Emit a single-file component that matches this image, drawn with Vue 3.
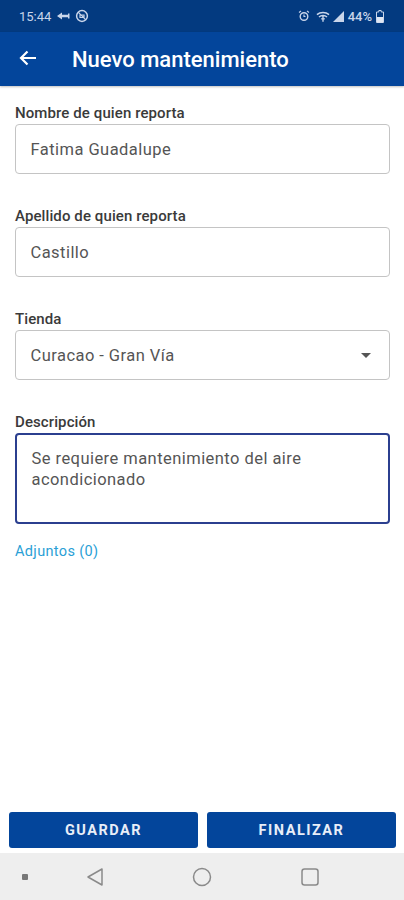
<script setup>
const fields = [
  { label: 'Nombre de quien reporta', value: 'Fatima Guadalupe' },
  { label: 'Apellido de quien reporta', value: 'Castillo' },
]
</script>

<template>
  <div class="screen">
    <div class="status">
      <div class="st-left">
        <span>15:44</span>
        <svg width="14" height="10" viewBox="0 0 14 10"><path d="M1 5l5-3.500v2.300h6V2.500h1.500v5H12V6.200H6v2.300z" fill="#c9d5ea"/></svg>
        <svg width="14" height="14" viewBox="0 0 14 14"><circle cx="7" cy="7" r="5.400" stroke="#c9d5ea" stroke-width="1.500" fill="none"/><path d="M3.200 3.200l7.600 7.600M5 6h4v2.500H5z" stroke="#c9d5ea" stroke-width="1.200" fill="none"/></svg>
      </div>
      <div class="st-right">
        <svg width="12" height="12" viewBox="0 0 12 12"><circle cx="6" cy="6.500" r="3.800" stroke="#c9d5ea" stroke-width="1.400" fill="none"/><path d="M1 2.500l2-1.500M11 2.500L9 1M6 4.500v2h1.500" stroke="#c9d5ea" stroke-width="1.100" fill="none"/></svg>
        <svg class="wifi" width="14" height="13" viewBox="0 0 15 13"><path d="M1 4.500C4.500 1.500 10.500 1.500 14 4.500M3.200 7C5.500 5 9.500 5 11.800 7M7.500 6v6" stroke="#c9d5ea" stroke-width="1.500" fill="none"/><path d="M5.500 9h4" stroke="#c9d5ea" stroke-width="1.300"/></svg>
        <svg class="signal" width="13" height="11" viewBox="0 0 13 11"><path d="M1 11L12 0v11z" fill="#c9d5ea"/></svg>
        <span class="pct">44%</span>
        <svg width="10" height="13" viewBox="0 0 8 13"><path d="M2.800 .5h2.400v1.500H7.500v10.500H.5V2h2.300z" stroke="#c9d5ea" stroke-width="1" fill="none"/><rect x="1" y="7" width="6" height="5.500" fill="#dfe6f3"/></svg>
      </div>
    </div>

    <header class="bar">
      <svg class="back" width="18" height="16" viewBox="0 0 18 16"><path d="M17 8H2M8.500 1.500L2 8l6.500 6.500" stroke="#fff" stroke-width="2.200" fill="none"/></svg>
      <h1>Nuevo mantenimiento</h1>
    </header>

    <main class="form">
      <div v-for="f in fields" :key="f.label" class="field">
        <label>{{ f.label }}</label>
        <div class="box">{{ f.value }}</div>
      </div>
      <div class="field">
        <label>Tienda</label>
        <div class="box select">
          <span>Curacao - Gran Vía</span>
          <i class="caret"></i>
        </div>
      </div>
      <div class="field desc">
        <label>Descripción</label>
        <div class="box area">Se requiere mantenimiento del aire acondicionado</div>
      </div>
      <a class="attach">Adjuntos (0)</a>
    </main>

    <div class="actions">
      <button>GUARDAR</button>
      <button>FINALIZAR</button>
    </div>

    <nav class="nav">
      <span class="dot"></span>
      <svg width="18" height="20" viewBox="0 0 18 20"><path d="M16 2L2 10l14 8z" stroke="#8a8a8a" stroke-width="1.500" fill="none" stroke-linejoin="round"/></svg>
      <svg width="20" height="20" viewBox="0 0 20 20"><circle cx="10" cy="10" r="8.500" stroke="#8a8a8a" stroke-width="1.500" fill="none"/></svg>
      <svg width="20" height="20" viewBox="0 0 20 20"><rect x="2" y="2" width="16" height="16" rx="2.500" stroke="#8a8a8a" stroke-width="1.500" fill="none"/></svg>
    </nav>
  </div>
</template>

<style scoped>
.screen {
  width: 404px;
  height: 900px;
  display: flex;
  flex-direction: column;
  background: #fff;
  font-family: Roboto, "Liberation Sans", sans-serif;
  overflow: hidden;
}
.status {
  height: 32px;
  flex: none;
  background: #033a80;
  color: #c9d5ea;
  display: flex;
  align-items: center;
  justify-content: space-between;
  padding: 0 19px 0 19px;
  font-size: 13px;
}
.st-left, .st-right { display: flex; align-items: center; gap: 2px; }
.st-left { gap: 5px; }
.st-right svg:first-child { margin-right: 4px; }
.pct { font-weight: 500; margin: 0 1px; }
.bar {
  height: 54px;
  flex: none;
  background: #03459b;
  display: flex;
  align-items: center;
  padding: 0 0 0 19px;
  box-shadow: 0 1px 2px rgba(0,0,0,.25);
  position: relative;
}
.bar h1 {
  margin: 0 0 0 35px;
  color: #fff;
  font-size: 22px;
  font-weight: 500;
  letter-spacing: 0;
}
.back { margin-bottom: 3px; }
.form {
  flex: 1;
  padding: 18px 14px 0 15px;
}
.field { margin-bottom: 33px; }
.field label {
  display: block;
  font-size: 15px;
  font-weight: 500;
  line-height: 18px;
  letter-spacing: .1px;
  color: #3a3a3a;
  margin-bottom: 2px;
}
.box {
  box-sizing: border-box;
  height: 50px;
  border: 1.500px solid #c4c4c4;
  border-radius: 4px;
  padding: 0 14.500px;
  display: flex;
  align-items: center;
  font-size: 16.500px;
  letter-spacing: .45px;
  color: #555;
}
.select { justify-content: space-between; padding-right: 18px; }
.caret {
  width: 0;
  height: 0;
  border-left: 5px solid transparent;
  border-right: 5px solid transparent;
  border-top: 5px solid #555;
}
.area {
  height: 91px;
  align-items: flex-start;
  padding-top: 13px;
  line-height: 21px;
  border: 2px solid #2b3f8f;
}
.desc { margin-bottom: 19px; }
.attach {
  display: block;
  font-size: 14.500px;
  line-height: 18px;
  letter-spacing: .35px;
  color: #2a9fd6;
}
.actions {
  flex: none;
  display: flex;
  gap: 9px;
  padding: 0 8px 0 9px;
  margin-bottom: 5px;
}
.actions button {
  flex: 1;
  height: 36px;
  border: none;
  border-radius: 3px;
  background: #03459b;
  color: #e8eef8;
  font-family: inherit;
  font-size: 14.500px;
  font-weight: 700;
  letter-spacing: 1.500px;
}
.nav {
  height: 47px;
  flex: none;
  background: #eeeeee;
  display: grid;
  grid-template-columns: 50px 90px 124px 92px;
  justify-items: center;
  align-items: center;
}
.dot {
  width: 6px;
  height: 6px;
  background: #777;
  border-radius: 1px;
}
</style>
